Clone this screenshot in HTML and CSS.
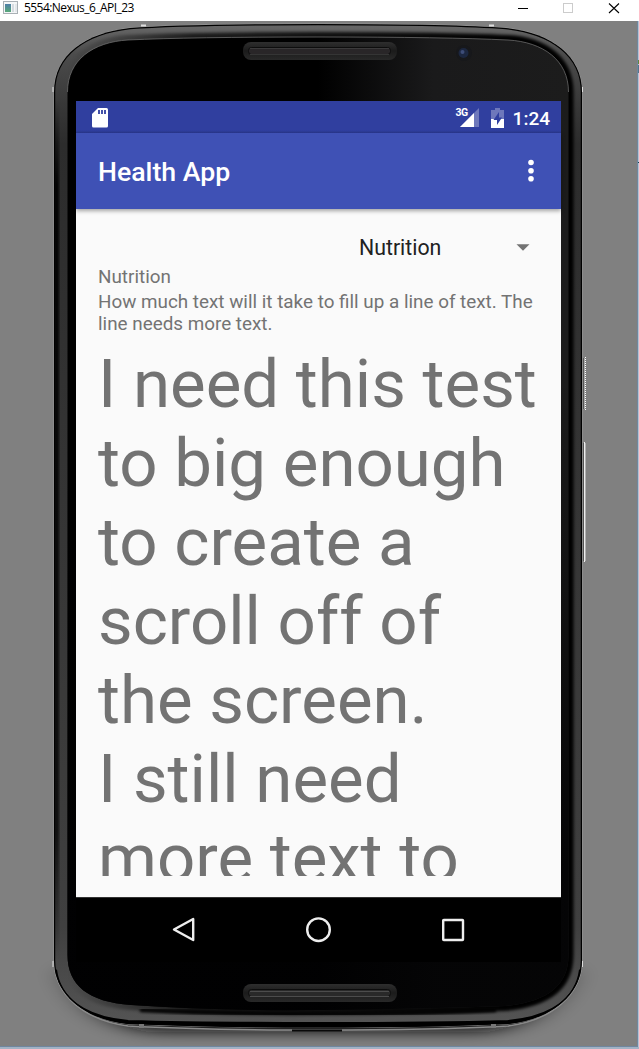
FILE: index.html
```
<!DOCTYPE html>
<html lang="en">
<head>
<meta charset="utf-8">
<title>5554:Nexus_6_API_23</title>
<link rel="stylesheet" href="styles.css">
</head>
<body>
<div class="window">
  <header class="titlebar">
    <svg class="app-icon" width="16" height="14" viewBox="0 0 16 14">
      <defs><linearGradient id="ico" x1="0" y1="0" x2="0" y2="1"><stop offset="0" stop-color="#4f7fa8"/><stop offset="1" stop-color="#58a878"/></linearGradient></defs>
      <rect x=".5" y=".5" width="14" height="12" fill="#f4f6f7" stroke="#a9b0b5"/>
      <rect x="2" y="3" width="6" height="8" fill="url(#ico)"/>
      <rect x="9" y="3" width="2" height="8" fill="#d5dbe0"/><rect x="12" y="3" width="2" height="8" fill="#e4e8eb"/>
    </svg>
    <span class="window-title">5554:Nexus_6_API_23</span>
    <svg class="window-buttons" width="110" height="16" viewBox="0 0 110 16" fill="none">
      <path d="M5 8.5H15" stroke="#000"/>
      <rect x="50.5" y="3.500" width="9" height="9" stroke="#ccc"/>
      <path d="M96 3.500L106 13M106 3.500L96 13" stroke="#000" stroke-width="1.100"/>
    </svg>
  </header>
  <main class="stage">
    <svg class="device" width="639" height="1028" viewBox="0 21 639 1028">
      <defs>
        <path id="body" d="M54 110V92C54 55 85 33 130 28Q180 24 318 24T506 28C551 33 582 55 582 92V960C582 994 553 1019 508 1024Q420 1027.500 318 1027.500T128 1024C83 1019 54 994 54 960Z"/>
        <path id="glass" d="M67.500 110V92C67.500 60 93 42 128 40Q190 37 318 37T508 40C543 42 568.500 60 568.500 92V955C568.500 985 548 1002 505 1006Q420 1009 318 1010T131 1005C88 1002 67.500 985 67.500 955Z"/>
        <clipPath id="bodyClip"><use href="#body"/></clipPath>
        <linearGradient id="shine" x1="0" x2="1" y1="0" y2="0"><stop offset="0" stop-color="#000"/><stop offset=".5" stop-color="#000"/><stop offset=".73" stop-color="#1a1a1b"/><stop offset="1" stop-color="#1c1c1c"/></linearGradient>
        <linearGradient id="fade" x1="0" x2="0" y1="0" y2="1"><stop offset="0" stop-color="#000" stop-opacity="0"/><stop offset=".35" stop-color="#000" stop-opacity="0"/><stop offset=".85" stop-color="#010102" stop-opacity=".85"/></linearGradient>
        <linearGradient id="rim" x1="0" x2="0" y1="0" y2="1"><stop offset="0" stop-color="#686868"/><stop offset=".03" stop-color="#4c4c4c"/><stop offset=".08" stop-color="#383838"/><stop offset=".12" stop-color="#2c2c2c"/><stop offset=".9" stop-color="#404040"/><stop offset="1" stop-color="#555"/></linearGradient>
        <linearGradient id="inner" x1="0" x2="1" y1="0" y2="0"><stop offset="0" stop-color="#000" stop-opacity="0"/><stop offset=".25" stop-color="#000" stop-opacity=".7"/><stop offset=".9" stop-color="#000"/></linearGradient>
        <linearGradient id="bar" x1="0" x2="0" y1="0" y2="1"><stop offset="0" stop-color="#2e2e2e"/><stop offset=".5" stop-color="#1b1b1b"/><stop offset="1" stop-color="#292929"/></linearGradient>
        <linearGradient id="side" x1="0" x2="0" y1="0" y2="1"><stop offset="0" stop-color="#000" stop-opacity="0"/><stop offset=".1" stop-color="#000"/><stop offset=".85" stop-color="#000" stop-opacity=".8"/><stop offset="1" stop-color="#000" stop-opacity="0"/></linearGradient>
        <filter id="b1" x="-10%" y="-10%" width="120%" height="120%"><feGaussianBlur stdDeviation="1.800"/></filter>
        <filter id="b2" x="-20%" y="-100%" width="140%" height="300%"><feGaussianBlur stdDeviation="17 7"/></filter>
      </defs>
      <rect y="21" width="637" height="1026" fill="#808080"/>
      <path d="M72 970C82 1005 110 1026 150 1032H486C526 1026 554 1005 564 970Z" fill="#111" opacity=".9" filter="url(#b2)"/>
      <path d="M54 960C54 995 84 1020 128 1026Q200 1030 318 1030T508 1026C552 1020 582 995 582 960" fill="#222" stroke="#8a8a8a" stroke-width="1.500"/>
      <use href="#body" fill="url(#rim)" stroke="#999" stroke-width="1"/>
      <g clip-path="url(#bodyClip)">
        <use href="#glass" fill="none" stroke="url(#inner)" stroke-width="10" filter="url(#b1)"/>
        <rect x="54" y="100" width="5" height="860" fill="url(#side)" filter="url(#b1)"/>
        <path d="M140 1010Q220 1014 318 1014T496 1010" fill="none" stroke="#000" stroke-width="4" filter="url(#b1)"/>
        <use href="#body" fill="none" stroke="#000" stroke-width="2.400"/>
        <path d="M54 970C58 1000 83 1019 128 1023Q200 1025 318 1025T508 1023C553 1019 578 1000 582 970" fill="none" stroke="#000" stroke-width="6"/>
      </g>
      <use href="#glass" fill="url(#shine)"/>
      <use href="#glass" fill="url(#fade)"/>
      <path d="M67.500 92C67.500 60 93 42 128 40Q190 37 318 37T508 40C543 42 568.500 60 568.500 92" fill="none" stroke="#777" stroke-width=".7"/>
      <path d="M292 1030.500H342" stroke="#090909" stroke-width="2"/>
      <path d="M141 25.500H146M489 25.500H494" stroke="#ddd" stroke-width="2"/>
      <path d="M53 87V92M582.500 87V92M53 961V967M582.500 961V967" stroke="#ddd"/>
      <path d="M139 1026H144M491 1026H496" stroke="#777" stroke-width="4"/>
      <rect x="243" y="42" width="154" height="18" rx="8" fill="url(#bar)"/>
      <rect x="248.500" y="47.500" width="142" height="7" rx="3" fill="#292628" stroke="#0d0d0d"/>
      <path d="M250 48.500H389M250 54.500H389" stroke="#404040" stroke-width=".8"/>
      <rect x="243" y="984" width="154" height="18" rx="8" fill="url(#bar)"/>
      <rect x="248.500" y="989.500" width="142" height="7" rx="3" fill="#292929" stroke="#0d0d0d"/>
      <path d="M250 991.500H389M250 996.500H389" stroke="#4c4c4c"/>
      <circle cx="464" cy="53" r="8" fill="#17181b"/><circle cx="463.500" cy="53" r="5" fill="#1c2740"/><circle cx="462.500" cy="52" r="2" fill="#3d4d78"/>
      <path d="M585.500 357V410" stroke="#fff" stroke-dasharray="1 1"/><path d="M583.500 358V409" stroke="#555"/><path d="M584.500 358V409" stroke="#aaa"/>
      <path d="M584.500 442V562" stroke="#eee"/><path d="M585.500 443V561" stroke="#b0b0b0"/><path d="M583.500 443V561" stroke="#555"/>
      <path d="M637.500 21V1047" stroke="#70879f"/><path d="M638.500 21V1049" stroke="#b5c3d3"/>
      <path d="M0 1046.500H638" stroke="#70879f"/><path d="M0 1048H639" stroke="#a2b3c5" stroke-width="2"/>
      <path d="M638.500 60V64" stroke="#60883c"/><path d="M638.500 65V73" stroke="#54758b"/><path d="M638.500 162V163" stroke="#124555"/>
    </svg>
    <section class="screen">
      <div class="statusbar">
        <svg class="sd" width="16" height="20" viewBox="0 0 16 20"><path d="M6 0H14.500Q16 0 16 1.500V18Q16 19.500 14.500 19.500H1.500Q0 19.500 0 18V6Z" fill="#fff"/><path d="M7 2V6M10 2V6M13 2V6" stroke="#303f9f" stroke-width="1.800"/></svg>
        <span class="network">3G</span>
        <svg class="signal" width="20" height="19" viewBox="0 0 20 19"><path d="M19 0V19H0Z" fill="#6e78bb"/><path d="M14 5V19H0Z" fill="#fff"/></svg>
        <svg class="battery" width="13" height="20" viewBox="0 0 13 20"><path d="M4 0H9V2H13V11H0V2H4Z" fill="#6e78bb"/><path d="M0 11H13V20H0Z" fill="#fff"/><path d="M8 4L2.500 12H6V17L11 9.500H8Z" fill="#303f9f"/></svg>
        <span class="clock">1:24</span>
      </div>
      <div class="appbar">
        <h1 class="app-title">Health App</h1>
        <svg width="6" height="24" viewBox="0 0 6 24" fill="#fff"><circle cx="3" cy="3.500" r="2.800"/><circle cx="3" cy="11.700" r="2.800"/><circle cx="3" cy="19.800" r="2.800"/></svg>
      </div>
      <div class="content">
        <div class="spinner"><span>Nutrition</span><svg width="14" height="7" viewBox="0 0 14 7"><path d="M.5 .2H13.500L7 6.700Z" fill="#737373"/></svg></div>
        <p class="label">Nutrition</p>
        <p class="intro">How much text will it take to fill up a line of text. The line needs more text.</p>
        <div class="scroll">I need this test<br>to big enough<br>to create a<br>scroll off of<br>the screen.<br>I still need<br>more text to</div>
      </div>
      <nav class="navbar">
        <svg width="24" height="28" viewBox="0 0 24 28"><path d="M21.200 3V24L2 13.500Z" fill="none" stroke="#eee" stroke-width="2.400" stroke-linejoin="round"/></svg>
        <svg width="28" height="28" viewBox="0 0 28 28"><circle cx="13.500" cy="13.700" r="11.300" fill="none" stroke="#eee" stroke-width="2.400"/></svg>
        <svg width="24" height="28" viewBox="0 0 24 28"><rect x="2.200" y="4" width="19.800" height="20" rx=".6" fill="none" stroke="#eee" stroke-width="2.400"/></svg>
      </nav>
    </section>
  </main>
</div>
</body>
</html>
```
FILE: styles.css
```
* { box-sizing: border-box; }
body { margin: 0; background: #808080; font-family: Roboto, sans-serif; overflow: hidden; }
.window { width: 639px; height: 1049px; display: flex; flex-direction: column; overflow: hidden; }
.titlebar { height: 21px; flex: none; background: #fff; display: flex; align-items: flex-start; padding: 1px 12px 0 3px; }
.app-icon { flex: none; }
.window-title { font: 12px/14px "Open Sans", "Noto Sans", sans-serif; letter-spacing: -0.55px; color: #000; margin-left: 5px; flex: 1; white-space: nowrap; }
.window-buttons { margin-right: 4px; margin-top: -1px; }
.stage { position: relative; height: 1028px; padding: 80px 0 0 76px; }
.device { position: absolute; left: 0; top: 0; }
.screen { position: relative; width: 485px; height: 861px; display: flex; flex-direction: column; background: #fafafa; }
.statusbar { height: 32px; flex: none; background: linear-gradient(#303f9f 92%, #29378d); display: flex; padding: 7px 11px 0 16px; color: #fff; }
.sd { flex: none; margin-right: auto; }
.network { font-size: 10.5px; line-height: 10px; font-weight: 700; letter-spacing: -0.6px; margin: 0 -9px 0 0; }
.signal { margin: 0 11px 0 1px; }
.battery { margin-right: 9px; }
.clock { font-size: 19px; line-height: 21px; font-weight: 500; }
.appbar { height: 76px; flex: none; background: #3f51b5; display: flex; align-items: center; justify-content: space-between; padding: 0 27px 0 22px; box-shadow: 0 2px 4px rgba(0,0,0,.35); z-index: 1; }
.app-title { margin: 2px 0 0; color: #fff; font-size: 26.700px; line-height: 32px; font-weight: 500; }
.content { height: 688px; flex: none; padding: 25px 22px 0; color: #737373; }
.spinner { display: flex; align-items: center; justify-content: space-between; height: 26px; margin: 0 9px 6px 261px; color: #212121; font-size: 21.300px; }
.label, .intro { margin: 0; font-size: 18.850px; line-height: 22px; }
.intro { margin-top: 3px; width: 445px; }
.scroll { margin-top: 10px; width: 450px; height: 531px; overflow: hidden; font-size: 67.200px; line-height: 79px; white-space: nowrap; }
.navbar { flex: 1; background: #000; border-top: 1px solid #333; display: flex; justify-content: space-between; align-items: center; padding: 0 96px; }
```
